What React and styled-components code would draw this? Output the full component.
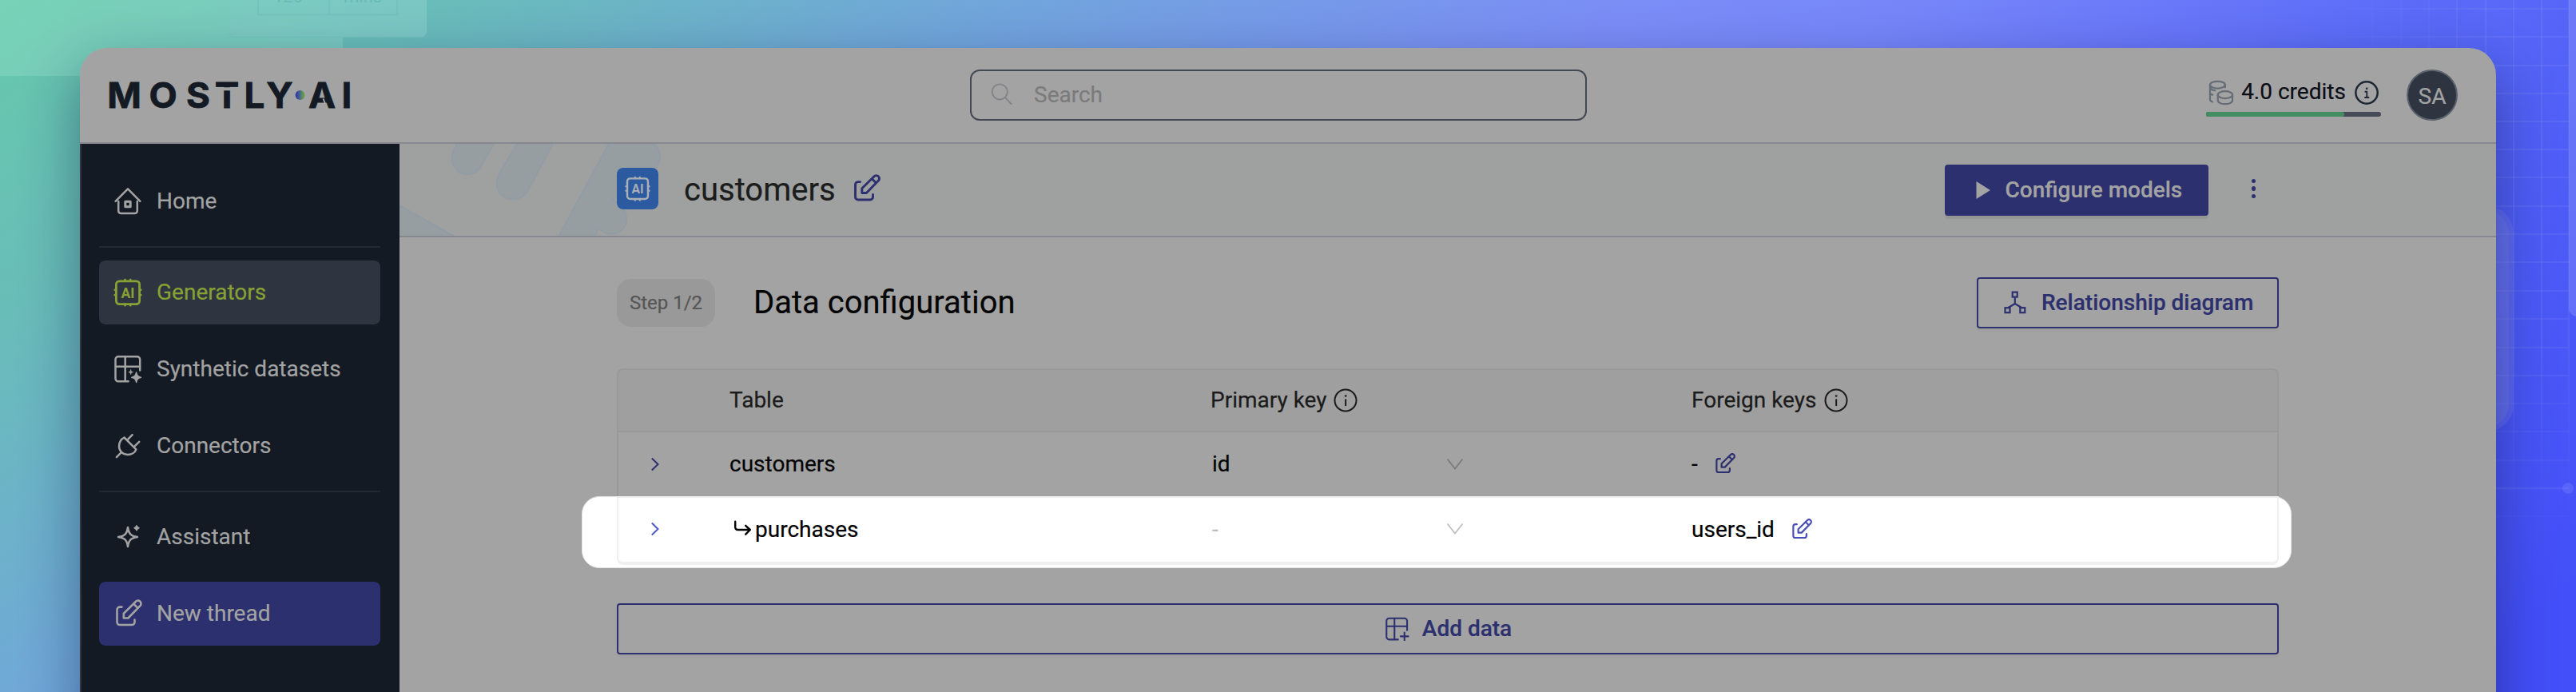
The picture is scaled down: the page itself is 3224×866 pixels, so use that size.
import React from "react";
import styled, { createGlobalStyle, css } from "styled-components";

const c = {
  panel: "#a3a3a3",
  ink: "#131a23",
  indigo: "#2c306e",
  line: "#85888f",
  navText: "#a3a3a3",
  lime: "#87a134",
};

const Global = createGlobalStyle`
  *, *::before, *::after { box-sizing: border-box; }
  html, body { margin: 0; padding: 0; }
  body {
    font-family: Roboto, "Liberation Sans", sans-serif;
    font-size: 28px;
    -webkit-text-stroke: 0.2px currentColor;
  }
  svg text { -webkit-text-stroke: 0; }
`;

const Stage = styled.div`
  position: relative;
  height: 866px;
  overflow: hidden;
  padding: 60px 100px 0;
  background: linear-gradient(
    143deg,
    #66c9ab 0%,
    #69bcba 13%,
    #70a7d9 27.5%,
    #7b8df7 47%,
    #7686f9 55%,
    #6a79f9 62%,
    #5c6cf8 69%,
    #4f5ef6 79%,
    #434ff8 96%
  );
`;

const Backdrop = styled.svg`
  position: absolute;
  inset: 0;
`;

const Window = styled.div`
  position: relative;
  display: flex;
  flex-direction: column;
  height: 920px;
  border-radius: 34px 34px 0 0;
  overflow: hidden;
  background: ${c.panel};
`;

const WindowShadow = styled.div`
  position: relative;
  border-radius: 34px 34px 0 0;
  box-shadow: 0 26px 70px rgba(10, 20, 60, 0.42);
`;

const Header = styled.header`
  display: flex;
  align-items: center;
  justify-content: space-between;
  flex: none;
  height: 120px;
  padding: 0 48px 0 34px;
  border-bottom: 2px solid ${c.line};
`;

const Logo = styled.svg`
  display: block;
  flex: none;
  overflow: visible;
`;

const HeaderSide = styled.div`
  display: flex;
  align-items: center;
  flex: 1 1 0;
  justify-content: ${(p) => (p.$end ? "flex-end" : "flex-start")};
  gap: 32px;
`;

const SearchBox = styled.label`
  display: flex;
  align-items: center;
  gap: 26px;
  flex: none;
  width: 772px;
  height: 64px;
  margin-right: 10px;
  padding: 0 0 2px 24px;
  border: 2px solid #434855;
  border-radius: 12px;
  color: #7b7b7c;
`;

const Credits = styled.div`
  display: flex;
  flex-direction: column;
  gap: 6px;
  width: 219px;
  padding-top: 5px;
`;

const CreditsRow = styled.div`
  display: flex;
  align-items: center;
  justify-content: space-between;
  height: 36px;
  padding: 0 3px;
  color: #0b0d17;
  svg { display: block; }
  span:nth-child(2) { padding: 0 2px 2px 0; }
`;

const Meter = styled.div`
  height: 6px;
  border-radius: 3px;
  background: #454b57;
`;

const MeterFill = styled.div`
  width: 173px;
  height: 6px;
  border-radius: 3px;
  background: #448c62;
`;

const Avatar = styled.div`
  display: flex;
  align-items: center;
  justify-content: center;
  width: 64px;
  height: 64px;
  padding-top: 2px;
  border: 2px solid #5c626d;
  border-radius: 50%;
  background: #2e3440;
  color: #a3a3a3;
`;

const Body = styled.div`
  display: flex;
  flex: 1;
`;

const Sidebar = styled.nav`
  display: flex;
  flex-direction: column;
  flex: none;
  width: 400px;
  padding: 32px 24px 0 22px;
  border-left: 2px solid #30353d;
  background: ${c.ink};
`;

const NavItem = styled.a`
  display: flex;
  align-items: center;
  gap: 18px;
  flex: none;
  height: 80px;
  padding-left: 18px;
  margin-bottom: 16px;
  border-radius: 8px;
  color: ${(p) => (p.$active ? c.lime : c.navText)};
  background: ${(p) => (p.$active ? "#2e3440" : p.$primary ? c.indigo : "transparent")};
`;

const NavLabel = styled.span`
  padding-bottom: 2px;
`;

const NavDivider = styled.div`
  flex: none;
  height: 2px;
  margin-bottom: 16px;
  background: #222935;
`;

const Main = styled.main`
  flex: 1;
  min-width: 0;
`;

const Hero = styled.div`
  position: relative;
  display: flex;
  align-items: center;
  height: 117px;
  padding: 0 301px 0 272px;
  border-bottom: 2px solid ${c.line};
  background: #9fa1a0;
`;

const HeroArt = styled.svg`
  position: absolute;
  left: 0;
  top: 0;
`;

const HeroTitle = styled.div`
  position: relative;
  display: flex;
  align-items: center;
  flex: 1;
`;

const Badge = styled.span`
  display: flex;
  align-items: center;
  justify-content: center;
  width: 52px;
  height: 52px;
  margin-top: -3px;
  border-radius: 8px;
  background: #2b5aa0;
  color: #a9aeb4;
`;

const Title = styled.h1`
  margin: 0 20px 0 32px;
  font-size: 40px;
  font-weight: 400;
  line-height: 48px;
  color: #1b1c1c;
`;

const IconSlot = styled.span`
  display: flex;
  color: ${(p) => p.$color || c.indigo};
  margin-top: ${(p) => p.$top || 0}px;
`;

const Button = styled.button`
  display: flex;
  align-items: center;
  justify-content: ${(p) => (p.$block ? "center" : "flex-start")};
  gap: ${(p) => p.$gap || 19}px;
  width: ${(p) => (p.$width ? `${p.$width}px` : "100%")};
  height: 64px;
  margin: 0;
  padding: ${(p) => (p.$block ? "0 0 1px 2px" : p.$filled ? "0 0 0 37px" : "0 0 1px 32px")};
  border: 2px solid ${c.indigo};
  border-radius: 4px;
  background: transparent;
  color: ${c.indigo};
  font: 500 28px/34px Roboto, "Liberation Sans", sans-serif;
  white-space: nowrap;
  box-shadow: 0 4px 0 rgba(0, 0, 0, 0.015);
  ${(p) =>
    p.$filled &&
    css`
      background: ${c.indigo};
      color: ${c.panel};
      box-shadow: 0 4px 0 rgba(0, 0, 0, 0.06);
    `}
`;

const Kebab = styled.span`
  display: flex;
  flex-direction: column;
  gap: 4px;
  margin: -3px 0 0 54px;
  i {
    width: 5.5px;
    height: 5.5px;
    border-radius: 50%;
    background: ${c.indigo};
  }
`;

const Content = styled.section`
  display: flex;
  flex-direction: column;
  padding: 50px 272px 0;
`;

const SectionHead = styled.div`
  display: flex;
  align-items: center;
  height: 64px;
`;

const StepPill = styled.span`
  display: flex;
  align-items: center;
  justify-content: center;
  width: 123px;
  height: 60px;
  padding-bottom: 1px;
  border-radius: 18px;
  background: #999;
  color: #555;
  font-size: 24px;
`;

const SectionTitle = styled.h2`
  flex: 1;
  margin: 0 0 0 48px;
  font-size: 40px;
  font-weight: 400;
  line-height: 48px;
  color: #050505;
`;

const Table = styled.div`
  position: relative;
  isolation: isolate;
  margin-top: 50px;
  border: 2px solid #999;
  border-bottom: 0;
  border-radius: 8px 8px 0 0;
`;

const rowGrid = css`
  display: grid;
  grid-template-columns: 139px 602px 602px 1fr;
  align-items: center;
`;

const HeadRow = styled.div`
  ${rowGrid}
  height: 78px;
  padding-bottom: 1px;
  border-bottom: 2px solid #999;
  border-radius: 6px 6px 0 0;
  background: #9f9f9f;
  color: #1b1b1b;
`;

const Row = styled.div`
  ${rowGrid}
  position: relative;
  height: 80px;
  padding-bottom: 1px;
  color: #030303;
`;

const SpotRow = styled(Row)`
  height: 86px;
  padding: 1px 0 5px;
  color: #000;
  &::before {
    content: "";
    position: absolute;
    z-index: -1;
    left: -46px;
    right: -18px;
    top: 0;
    height: 90px;
    border: 1px solid #e4e4e4;
    border-radius: 22px;
    background: #fff;
  }
  &::after {
    content: "";
    position: absolute;
    z-index: -1;
    inset: 0 -2px;
    border: 2px solid #f0f0f0;
    border-bottom-width: 4px;
    border-radius: 0 0 8px 8px;
  }
`;

const Cell = styled.div`
  display: flex;
  align-items: center;
  color: ${(p) => (p.$muted ? "#bdbdbd" : "inherit")};
  gap: ${(p) => p.$gap || 0}px;
  padding-left: ${(p) => p.$pad || 0}px;
`;

const SelectValue = styled.span`
  width: 295px;
  padding-left: 2px;
`;

const AddArea = styled.div`
  display: flex;
  margin-top: 48px;
`;

const Svg = ({ size = 36, w = 2.5, children }) => (
  <svg
    width={size}
    height={size}
    viewBox="0 0 36 36"
    fill="none"
    stroke="currentColor"
    strokeWidth={w}
    strokeLinecap="round"
    strokeLinejoin="round"
  >
    {children}
  </svg>
);

const HomeIcon = () => (
  <Svg>
    <path d="M2.6 17.8 18 2.3l15.4 15.5" />
    <path d="M6.2 18v12a3 3 0 0 0 3 3h17.6a3 3 0 0 0 3-3V18" />
    <rect x="14.8" y="18.2" width="6.4" height="6.6" strokeWidth="3" />
  </Svg>
);

const ChipIcon = ({ size }) => (
  <Svg size={size} w={2.8}>
    <rect x="3.4" y="3.8" width="29.2" height="28.8" rx="4" />
    <path d="M14.5 3.4V2.2M21.2 3.4V2.2M14.5 33v1.2M21.2 33v1.2M3 14.8H1.8M3 21.2H1.8M33 14.8h1.2M33 21.2h1.2" />
    <text
      x="18"
      y="24.6"
      textAnchor="middle"
      fontFamily="Roboto, sans-serif"
      fontSize="17.6"
      fontWeight="700"
      fill="currentColor"
      stroke="none"
    >
      AI
    </text>
  </Svg>
);

const DatasetIcon = () => (
  <Svg>
    <path d="M33.2 19.5V5.8a3.5 3.5 0 0 0-3.5-3.5H6a3.5 3.5 0 0 0-3.5 3.5v24A3.5 3.5 0 0 0 6 33.3h12.6M2.5 14.8h30.7M14.7 2.3v31" />
    <path
      d="M28.6 22c.9 4 2 5.2 6 6.3-4 1.1-5.1 2.3-6 6.3-.9-4-2-5.2-6-6.3 4-1.1 5.1-2.3 6-6.3z"
      fill="currentColor"
      strokeWidth="1.4"
    />
    <path
      d="M21.700 18.900c.4 1.900.9 2.400 2.800 2.800-1.900.4-2.400.9-2.800 2.800-.4-1.900-.9-2.400-2.800-2.800 1.900-.4 2.400-.9 2.800-2.800z"
      fill="currentColor"
      strokeWidth=".8"
    />
  </Svg>
);

const PlugIcon = () => (
  <Svg>
    <path d="M13.5 7.5 28.3 22.3C27 26.5 22.5 29 17.7 28.9 11.5 28.6 7.2 24.5 7 18.700 7 13.500 9.500 9.500 13.500 7.500z" />
    <path d="M18.300 9.600 23.600 4.200M26.800 18.200l5.400-5.400M9.600 26.400 3.900 32.200" />
  </Svg>
);

const SparkleIcon = () => (
  <Svg>
    <path d="M18 6c1.200 8 3.800 10.800 12 12-8.200 1.200-10.800 4-12 12-1.200-8-3.800-10.800-12-12 8.200-1.200 10.800-4 12-12z" />
    <path
      d="M29 3.800c.5 1.900 1.100 2.500 3 3-1.900.5-2.500 1.100-3 3-.5-1.900-1.100-2.500-3-3 1.900-.5 2.500-1.100 3-3z"
      fill="currentColor"
      strokeWidth="1.4"
    />
  </Svg>
);

const EditIcon = ({ size, w = 2.6 }) => (
  <Svg size={size} w={w}>
    <path d="M10.500 9.600H8a3.500 3.500 0 0 0-3.500 3.500v15.400A3.500 3.500 0 0 0 8 32h15a3.500 3.500 0 0 0 3.500-3.500v-3" />
    <path d="M12.800 23.500v-5.700L28 2.800a3.700 3.700 0 0 1 5.400 5.300L18.400 23.500zM25.200 5.600l5.200 5.300" />
  </Svg>
);

const InfoIcon = ({ size = 30, w = 2.4 }) => (
  <Svg size={size} w={w}>
    <circle cx="18" cy="18" r="16.2" />
    <path d="M18.200 17v8.600" />
    <circle cx="18.2" cy="11.4" r=".5" />
  </Svg>
);

const BoldInfoIcon = () => (
  <Svg size={30} w={3}>
    <circle cx="18" cy="18" r="16.4" />
    <path d="M16 16.500h2.300v8.500M15.600 25.200h5.400" strokeWidth="2.2" />
    <circle cx="18.2" cy="11.8" r=".7" strokeWidth="2" />
  </Svg>
);

const CoinsIcon = () => (
  <Svg size={32} w={2.5}>
    <ellipse cx="12.8" cy="7" rx="10.6" ry="5" />
    <path d="M2.200 7v20.500c0 1.500 1.300 2.600 3.300 3.300M2.200 18.500c.6 1.300 1.700 2 3.600 2.500M23.400 7v3.500M2.200 11.500c1.500 2 4 3 7 3.400" />
    <ellipse cx="23.5" cy="21" rx="10.3" ry="5" />
    <path d="M13.200 21v8c0 2.800 4.600 5 10.300 5s10.300-2.200 10.300-5v-8" />
  </Svg>
);

const SearchIcon = () => (
  <Svg size={28} w={2.4}>
    <circle cx="14.5" cy="14" r="12.3" />
    <path d="M23.500 23.500 33 33.500" />
  </Svg>
);

const PlayIcon = () => (
  <svg width="18" height="22" viewBox="0 0 18 22">
    <path d="M0.500 0 18 11 0.500 22z" fill="currentColor" />
  </svg>
);

const DiagramIcon = () => (
  <svg width="28" height="30" viewBox="0 0 28 30" fill="none" stroke="currentColor" strokeWidth="2.2">
    <rect x="10.7" y="1.600" width="6" height="6" />
    <rect x="1.5" y="21.200" width="6" height="6" />
    <rect x="20.3" y="21.200" width="6" height="6" />
    <path d="M13.800 8v8.500M5.500 21l8.300-5 8.300 5" />
  </svg>
);

const AddTableIcon = () => (
  <Svg size={30} w={2.5}>
    <path d="M32.500 20V6A4 4 0 0 0 28.500 2H5.500a4 4 0 0 0-4 4v24a4 4 0 0 0 4 4H19M1.500 14h31M13.500 2v32M28.500 23.500v11.500M22.700 29.200h11.600" />
  </Svg>
);

const ChevronRight = () => (
  <svg width="12" height="18" viewBox="0 0 12 18" fill="none" stroke="currentColor" strokeWidth="2">
    <path d="M1.800 1.500 9.500 9l-7.700 7.500" />
  </svg>
);

const ChevronDown = () => (
  <svg width="22" height="16" viewBox="0 0 22 16" fill="none" stroke="currentColor" strokeWidth="1.8">
    <path d="M1.500 1.500 11 13.500l9.500-12" />
  </svg>
);

const ChildArrow = () => (
  <svg width="24" height="22" viewBox="0 0 24 22" fill="none" stroke="currentColor" strokeWidth="2.4" strokeLinecap="round" strokeLinejoin="round">
    <path d="M2.200 1.800v7.200a3 3 0 0 0 3 3h15.600M15.200 6.800 20.800 12l-5.600 5.600" />
  </svg>
);

const gridX = [2934, 2969, 3005, 3040, 3075, 3111, 3146, 3181, 3215];
const gridY = [11, 46, 82, 117, 152, 187, 222, 258, 293, 328, 364, 399, 435, 470, 505, 540, 576, 611, 646];

function BackgroundArt() {
  return (
    <Backdrop width="3224" height="866" viewBox="0 0 3224 866">
      <defs>
        <linearGradient id="fadeX" x1="2900" x2="3120" y1="0" y2="0" gradientUnits="userSpaceOnUse">
          <stop offset="0" stopColor="#fff" stopOpacity="0" />
          <stop offset="1" stopColor="#fff" stopOpacity="0.06" />
        </linearGradient>
        <linearGradient id="fadeY" x1="0" x2="0" y1="420" y2="660" gradientUnits="userSpaceOnUse">
          <stop offset="0" stopColor="#fff" stopOpacity="0.06" />
          <stop offset="1" stopColor="#fff" stopOpacity="0" />
        </linearGradient>
      </defs>
      <path d="M-10-10h297v50a7 7 0 0 0 7 7H429v48H-10z" fill="#b8f0e0" opacity="0.22" />
      <rect x="287" y="-10" width="247" height="56.5" rx="7" fill="#b4e6e6" opacity="0.25" />
      <g fill="none" stroke="#5fb5b5" strokeWidth="2" opacity="0.28">
        <rect x="323" y="-10" width="174" height="28.5" />
        <path d="M412 0v18" />
      </g>
      <g fill="#4fa6a6" opacity="0.4" fontFamily="Roboto, sans-serif" fontSize="22">
        <text x="342" y="3">120</text>
        <text x="430" y="3">mins</text>
      </g>
      <rect x="3215" y="-10" width="40" height="406" rx="10" fill="#fff" opacity="0.14" />
      {gridX.map((x, i) => (
        <rect key={x} x={x - 1} y="0" width="2" height="650" fill={x > 3100 ? "url(#fadeY)" : "#fff"} opacity={x > 3100 ? 1 : 0.006 + i * 0.009} />
      ))}
      {gridY.map((y) => (
        <rect key={y} x="2900" y={y - 1} width="315" height="2" fill="url(#fadeX)" opacity={y > 600 ? 0.3 : y > 500 ? 0.6 : 1} />
      ))}
      <rect x="3100" y="609.5" width="115" height="3" fill="#fff" opacity="0.05" />
      <circle cx="3214" cy="611" r="7" fill="#8b95ff" opacity="0.25" />
      <rect x="3060" y="258" width="86" height="282" rx="34" fill="#8a90e8" opacity="0.24" />
      <rect x="3060" y="264" width="80" height="270" rx="28" fill="#8a90e8" opacity="0.2" />
    </Backdrop>
  );
}

function Brand() {
  return (
    <Logo width="306" height="40" viewBox="134 99 306 40">
      <defs>
        <linearGradient id="dot" x1="0" x2="1" y1="0" y2="0">
          <stop offset="0" stopColor="#2b2fa0" />
          <stop offset="0.35" stopColor="#45549c" />
          <stop offset="0.75" stopColor="#55955d" />
          <stop offset="1" stopColor="#7aa038" />
        </linearGradient>
      </defs>
      <g
        transform="scale(1.04 1)"
        fill={c.ink}
        stroke={c.ink}
        strokeWidth="0.8"
        fontFamily="Inter, sans-serif"
        fontSize="44"
        fontWeight="700"
        textAnchor="middle"
      >
        <text x="149.500 196.200 238.500 273.100 306.300 336.500" y="135">MOSTLY</text>
        <text x="387.500 417.300" y="135">AI</text>
      </g>
      <rect x="268" y="109.3" width="32" height="4" fill={c.panel} />
      <path d="M404.500 123.500l3.200 8" stroke={c.panel} strokeWidth="2" />
      <circle cx="375.6" cy="119" r="6" fill="url(#dot)" />
    </Logo>
  );
}

function HeroShapes() {
  return (
    <HeroArt width="360" height="115" viewBox="500 180 360 115" fill="#979ea2" stroke="#929ca5" strokeWidth="2">
      <path d="M490 251.500 569 296h-80z" />
      <path d="M573 178 567 190C562 203 570 218 585 218c10 0 16-6 20-15l14-25z" />
      <path d="M648 178 624 219c-7 16 2 30 18 30 10 0 17-6 21-15l30-56z" />
      <path d="M763 178 698 298h46l5-13c12 15 36 7 35-12-1-12-8-16-16-22l-2 0 52-38c14-14 8-30-4-35z" />
    </HeroArt>
  );
}

export default function App() {
  return (
    <>
      <Global />
      <Stage>
        <BackgroundArt />
        <WindowShadow>
          <Window>
            <Header>
              <HeaderSide>
                <Brand />
              </HeaderSide>
              <SearchBox>
                <IconSlot $color="#82838a"><SearchIcon /></IconSlot>
                Search
              </SearchBox>
              <HeaderSide $end>
                <Credits>
                  <CreditsRow>
                    <IconSlot $color="#676d77"><CoinsIcon /></IconSlot>
                    <span>4.0 credits</span>
                    <IconSlot $color="#202734"><BoldInfoIcon /></IconSlot>
                  </CreditsRow>
                  <Meter><MeterFill /></Meter>
                </Credits>
                <Avatar>SA</Avatar>
              </HeaderSide>
            </Header>
            <Body>
              <Sidebar>
                <NavItem><HomeIcon /><NavLabel>Home</NavLabel></NavItem>
                <NavDivider />
                <NavItem $active><ChipIcon /><NavLabel>Generators</NavLabel></NavItem>
                <NavItem><DatasetIcon /><NavLabel>Synthetic datasets</NavLabel></NavItem>
                <NavItem><PlugIcon /><NavLabel>Connectors</NavLabel></NavItem>
                <NavDivider />
                <NavItem><SparkleIcon /><NavLabel>Assistant</NavLabel></NavItem>
                <NavItem $primary><EditIcon /><NavLabel>New thread</NavLabel></NavItem>
              </Sidebar>
              <Main>
                <Hero>
                  <HeroShapes />
                  <HeroTitle>
                    <Badge><ChipIcon size={32} /></Badge>
                    <Title>customers</Title>
                    <IconSlot $top={-4}><EditIcon size={36} w={2.9} /></IconSlot>
                  </HeroTitle>
                  <Button $filled $width={330}>
                    <PlayIcon />
                    Configure models
                  </Button>
                  <Kebab><i /><i /><i /></Kebab>
                </Hero>
                <Content>
                  <SectionHead>
                    <StepPill>Step 1/2</StepPill>
                    <SectionTitle>Data configuration</SectionTitle>
                    <Button $width={378}>
                      <DiagramIcon />
                      Relationship diagram
                    </Button>
                  </SectionHead>
                  <Table>
                    <HeadRow>
                      <span />
                      <Cell>Table</Cell>
                      <Cell $gap={8}>Primary key <InfoIcon /></Cell>
                      <Cell $gap={10}>Foreign keys <InfoIcon /></Cell>
                    </HeadRow>
                    <Row>
                      <Cell $pad={40}><IconSlot><ChevronRight /></IconSlot></Cell>
                      <Cell>customers</Cell>
                      <Cell>
                        <SelectValue>id</SelectValue>
                        <IconSlot $color="#7b7b7b"><ChevronDown /></IconSlot>
                      </Cell>
                      <Cell $gap={20}>
                        -
                        <IconSlot><EditIcon size={27} w={2.9} /></IconSlot>
                      </Cell>
                    </Row>
                    <SpotRow>
                      <Cell $pad={40}><IconSlot $color="#5259c4"><ChevronRight /></IconSlot></Cell>
                      <Cell $pad={5} $gap={3}><ChildArrow />purchases</Cell>
                      <Cell $muted>
                        <SelectValue>-</SelectValue>
                        <IconSlot $color="#bfbfbf"><ChevronDown /></IconSlot>
                      </Cell>
                      <Cell $gap={20}>
                        users_id
                        <IconSlot $color="#474eb8"><EditIcon size={27} w={2.9} /></IconSlot>
                      </Cell>
                    </SpotRow>
                  </Table>
                  <AddArea>
                    <Button $block $gap={16}>
                      <AddTableIcon />
                      Add data
                    </Button>
                  </AddArea>
                </Content>
              </Main>
            </Body>
          </Window>
        </WindowShadow>
      </Stage>
    </>
  );
}
